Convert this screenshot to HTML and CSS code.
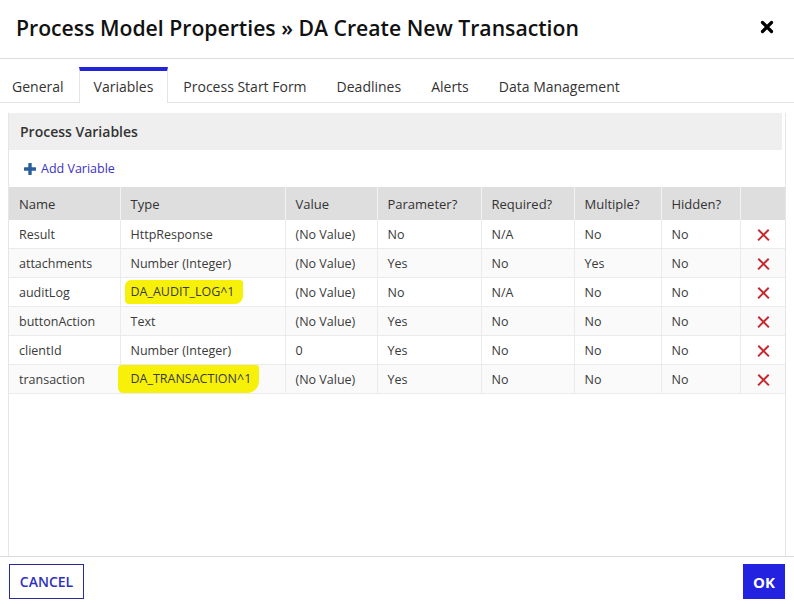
FILE: index.html
```html
<!DOCTYPE html>
<html lang="en">
<head>
  <meta charset="UTF-8" />
  <title>Process Model Properties</title>
  <link rel="stylesheet" href="styles.css">
</head>
<body>
  <div class="dialog">
    <div class="dialog-header">
      <h1>Process Model Properties &raquo; DA Create New Transaction</h1>
      <svg class="close" width="14" height="14" viewBox="0 0 14 14"><path d="M2.5 2.5 L11.5 11.5 M11.5 2.5 L2.5 11.5" stroke="#000" stroke-width="3.2" stroke-linecap="round"/></svg>
    </div>

    <div class="tabs">
      <div class="tab first">General</div>
      <div class="tab active">Variables</div>
      <div class="tab">Process Start Form</div>
      <div class="tab">Deadlines</div>
      <div class="tab">Alerts</div>
      <div class="tab">Data Management</div>
    </div>

    <div class="panel">
      <div class="panel-title">Process Variables</div>
      <div class="add-link">
        <svg width="12" height="12" viewBox="0 0 12 12"><path d="M6 1 V11 M1 6 H11" stroke="#2b5e9c" stroke-width="3.4" stroke-linecap="round"/></svg>
        <span>Add Variable</span>
      </div>

      <table class="vars">
        <colgroup>
          <col style="width:111px"><col style="width:165px"><col style="width:92px"><col style="width:104px">
          <col style="width:93px"><col style="width:87px"><col style="width:79px"><col style="width:45px">
        </colgroup>
        <thead>
          <tr>
            <th>Name</th><th>Type</th><th>Value</th><th>Parameter?</th>
            <th>Required?</th><th>Multiple?</th><th>Hidden?</th><th></th>
          </tr>
        </thead>
        <tbody>
          <tr>
            <td>Result</td><td>HttpResponse</td><td>(No Value)</td><td>No</td>
            <td>N/A</td><td>No</td><td>No</td><td class="del"><span class="x"></span></td>
          </tr>
          <tr>
            <td>attachments</td><td>Number (Integer)</td><td>(No Value)</td><td>Yes</td>
            <td>No</td><td>Yes</td><td>No</td><td class="del"><span class="x"></span></td>
          </tr>
          <tr>
            <td>auditLog</td><td><span class="mark mark-a">DA_AUDIT_LOG^1</span></td><td>(No Value)</td><td>No</td>
            <td>N/A</td><td>No</td><td>No</td><td class="del"><span class="x"></span></td>
          </tr>
          <tr>
            <td>buttonAction</td><td>Text</td><td>(No Value)</td><td>Yes</td>
            <td>No</td><td>No</td><td>No</td><td class="del"><span class="x"></span></td>
          </tr>
          <tr>
            <td>clientId</td><td>Number (Integer)</td><td>0</td><td>Yes</td>
            <td>No</td><td>No</td><td>No</td><td class="del"><span class="x"></span></td>
          </tr>
          <tr>
            <td>transaction</td><td><span class="mark mark-b">DA_TRANSACTION^1</span></td><td>(No Value)</td><td>Yes</td>
            <td>No</td><td>No</td><td>No</td><td class="del"><span class="x"></span></td>
          </tr>
        </tbody>
      </table>
    </div>

    <div class="dialog-footer">
      <button class="btn-cancel">CANCEL</button>
      <button class="btn-ok">OK</button>
    </div>
  </div>
</body>
</html>
```

FILE: styles.css
```css
body {
  margin: 0;
  font-family: 'Open Sans', 'Noto Sans', sans-serif;
  background: #fff;
  color: #333;
}
.dialog {
  width: 794px;
  height: 604px;
  display: flex;
  flex-direction: column;
  overflow: hidden;
}
.dialog-header {
  height: 59px;
  display: flex;
  align-items: center;
  justify-content: space-between;
  padding: 0 20px 0 16px;
  border-bottom: 1px solid #dcdcdc;
  box-sizing: border-box;
  flex: none;
}
.dialog-header h1 {
  margin: 0 0 4px;
  font-size: 21.2px;
  font-weight: 600;
  color: #111;
}
.close {
  margin-bottom: 5px;
}
.tabs {
  display: flex;
  padding-top: 8px;
  border-bottom: 1px solid #e4e4e4;
  flex: none;
}
.tab {
  height: 31px;
  padding: 0 14px;
  border-top: 4px solid transparent;
  border-left: 1px solid transparent;
  border-right: 1px solid transparent;
  font-size: 14px;
  line-height: 31px;
  color: #333;
  margin-bottom: -1px;
}
.tab.first {
  margin-left: -3px;
}
.tab.active {
  border-top-color: #2424d9;
  border-left-color: #e4e4e4;
  border-right-color: #e4e4e4;
  background: #fff;
  height: 32px;
}
.panel {
  flex: 1;
  margin: 10px 8px 0 8px;
  border-left: 1px solid #e6e6e6;
  border-right: 1px solid #e6e6e6;
}
.panel-title {
  height: 37px;
  line-height: 37px;
  background: #efefef;
  padding-left: 11px;
  margin-right: 3px;
  font-size: 14px;
  font-weight: 600;
  color: #333;
}
.add-link {
  height: 37px;
  display: flex;
  align-items: center;
  gap: 5px;
  padding-left: 15px;
  font-size: 12.5px;
  color: #3a32c4;
}
.vars {
  border-collapse: collapse;
  table-layout: fixed;
  width: 776px;
  font-size: 12.5px;
}
.vars th {
  background: #dedede;
  height: 33px;
  padding: 0 10px;
  text-align: left;
  font-weight: 400;
  font-size: 13px;
  color: #333;
  border-left: 1px solid #f2f2f2;
}
.vars th:first-child {
  border-left: none;
}
.vars td {
  height: 28px;
  padding: 0 10px;
  border-bottom: 1px solid #ebebeb;
  border-left: 1px solid #ebebeb;
  color: #3a3a3a;
  white-space: nowrap;
}
.vars td:first-child {
  border-left: none;
}
.vars tbody tr:nth-child(even) td {
  background: #fafafa;
}
.vars td.del {
  text-align: center;
  padding: 0;
}
.x {
  display: inline-block;
  position: relative;
  width: 13px;
  height: 13px;
  vertical-align: middle;
  margin-left: 2px;
}
.x::before,
.x::after {
  content: "";
  position: absolute;
  left: -1px;
  top: 5.5px;
  width: 15px;
  height: 2.3px;
  background: #c5282e;
  transform: rotate(45deg);
}
.x::after {
  transform: rotate(-45deg);
}
.mark {
  display: inline-block;
  background: #f7f10a;
  border-radius: 6px 3px 8px 4px;
}
.mark-a {
  padding: 3px 8px 4px 6px;
  margin-left: -6px;
}
.mark-b {
  padding: 5px 8px 6px 13px;
  margin-left: -13px;
  border-radius: 4px 3px 12px 5px;
}
.dialog-footer {
  flex: none;
  height: 48px;
  border-top: 1px solid #dcdcdc;
  display: flex;
  justify-content: space-between;
  align-items: flex-start;
  padding: 7px 9px 0;
  box-sizing: border-box;
}
.dialog-footer button {
  font-family: 'Open Sans', 'Noto Sans', sans-serif;
  height: 35px;
  cursor: pointer;
}
.btn-cancel {
  width: 75px;
  background: #fff;
  border: 1px solid #2a2a96;
  color: #3030bd;
  font-size: 14px;
  font-weight: 600;
}
.btn-ok {
  width: 42px;
  background: #2222e0;
  border: none;
  color: #fff;
  font-size: 15px;
  font-weight: 700;
}
```
